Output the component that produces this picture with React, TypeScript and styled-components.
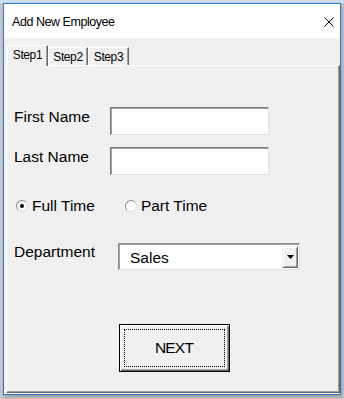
import React, { useState } from "react";
import styled, { createGlobalStyle } from "styled-components";

const GlobalStyle = createGlobalStyle`
  html, body {
    margin: 0;
    padding: 0;
    background: #d4e2f1;
    font-family: "Liberation Sans", Arial, sans-serif;
  }
`;

const Page = styled.div`
  width: 344px;
  height: 399px;
  overflow: hidden;
  background: linear-gradient(#cddff2 0, #cddff2 3px, #c9c9c9 3px);
  padding: 3px 0 0 3px;
  box-sizing: border-box;
`;

const Window = styled.div`
  width: 338px;
  height: 392px;
  box-sizing: border-box;
  border: 1px solid #2b7cc6;
  background: #f0f0f0;
  display: flex;
  flex-direction: column;
  box-shadow: 1px 2px 4px rgba(0, 0, 0, 0.25);
`;

const TitleBar = styled.div`
  height: 33px;
  background: #fff;
  display: flex;
  align-items: center;
  justify-content: space-between;
  padding: 1px 5px 0 8px;
  font-size: 12.5px;
  letter-spacing: -0.45px;
  color: #000;
`;

const Client = styled.div`
  flex: 1;
  display: flex;
  flex-direction: column;
  padding: 7px 0 1px 2px;
`;

const TabStrip = styled.div`
  display: flex;
  align-items: flex-end;
  height: 20px;
  padding-left: 1px;
`;

const Tab = styled.div<{ $active?: boolean; $w: number }>`
  position: relative;
  z-index: ${({ $active }) => ($active ? 1 : 0)};
  width: ${({ $w }) => $w}px;
  height: ${({ $active }) => ($active ? 21 : 18)}px;
  margin-bottom: ${({ $active }) => ($active ? -1 : 0)}px;
  box-sizing: border-box;
  background: #f0f0f0;
  border-top: 1px solid #fff;
  border-left: 1px solid #fff;
  border-right: 1px solid #696969;
  box-shadow: inset -1px 0 0 #a0a0a0;
  display: flex;
  align-items: center;
  justify-content: center;
  padding-bottom: ${({ $active }) => ($active ? 3 : 0)}px;
  font-size: 12px;
  letter-spacing: -0.4px;
  cursor: default;
`;

const Panel = styled.div`
  flex: 1;
  box-sizing: border-box;
  border-top: 1px solid #fff;
  border-left: 1px solid #fff;
  border-right: 1px solid #696969;
  border-bottom: 1px solid #696969;
  box-shadow: inset -1px -1px 0 #a0a0a0;
  display: flex;
  flex-direction: column;
  padding: 41px 7px 0 7px;
`;

const Row = styled.div<{ $gap: number }>`
  display: flex;
  align-items: flex-start;
  margin-top: ${({ $gap }) => $gap}px;
`;

const Label = styled.div<{ $w: number; $offset?: number }>`
  width: ${({ $w }) => $w}px;
  font-size: 15.5px;
  line-height: 18px;
  margin-top: ${({ $offset }) => $offset ?? 1}px;
`;

const TextBox = styled.input`
  width: 159px;
  height: 28px;
  box-sizing: border-box;
  border: 1px solid;
  border-color: #7a7a7a #e3e3e3 #e3e3e3 #7a7a7a;
  box-shadow: inset 1px 1px 0 #a0a0a0;
  background: #fff;
  outline: none;
  padding: 0 4px;
  font: 15px "Liberation Sans", Arial, sans-serif;
`;

const RadioRow = styled.div`
  display: flex;
  align-items: center;
  gap: 30px;
  margin-top: 22px;
  margin-left: 2px;
  height: 18px;
`;

const RadioItem = styled.label`
  display: flex;
  align-items: center;
  gap: 4px;
  font-size: 15.5px;
  line-height: 18px;
  cursor: default;
`;

const Circle = styled.span`
  width: 12px;
  height: 12px;
  box-sizing: border-box;
  border-radius: 50%;
  border: 1px solid;
  border-color: #8c8c8c #dcdcdc #dcdcdc #8c8c8c;
  background: #fff;
  display: flex;
  align-items: center;
  justify-content: center;
`;

const Dot = styled.span`
  width: 4px;
  height: 4px;
  border-radius: 50%;
  background: #000;
`;

const Select = styled.div`
  width: 182px;
  height: 27px;
  box-sizing: border-box;
  border: 1px solid;
  border-color: #8c8c8c #e3e3e3 #e3e3e3 #8c8c8c;
  box-shadow: inset 1px 1px 0 #a0a0a0;
  background: #fff;
  display: flex;
  align-items: stretch;
  padding: 2px 1px 1px 11px;
  font-size: 15.5px;
`;

const SelectText = styled.div`
  flex: 1;
  display: flex;
  align-items: center;
  padding-top: 1px;
`;

const ArrowButton = styled.div`
  width: 16px;
  box-sizing: border-box;
  background: #f0f0f0;
  border-top: 1px solid #f0f0f0;
  border-left: 1px solid #f0f0f0;
  border-right: 1px solid #696969;
  border-bottom: 1px solid #696969;
  box-shadow: inset 1px 1px 0 #fff, inset -1px -1px 0 #a0a0a0;
  display: flex;
  align-items: center;
  justify-content: center;
`;

const NextButton = styled.button`
  position: relative;
  align-self: center;
  margin-top: 54px;
  margin-left: 2px;
  width: 111px;
  height: 48px;
  box-sizing: border-box;
  background: #f0f0f0;
  border: 1px solid #000;
  box-shadow: inset 1px 1px 0 #fff, inset -1px -1px 0 #696969,
    inset -2px -2px 0 #a0a0a0;
  font: 15.5px "Liberation Sans", Arial, sans-serif;
  letter-spacing: -0.8px;
  color: #000;
  padding: 0 0 1px 0;

  &::after {
    content: "";
    position: absolute;
    inset: 4px;
    border: 1px dotted #000;
  }
`;

function App() {
  const [tab, setTab] = useState(1);
  const [fullTime, setFullTime] = useState(true);

  return (
    <Page>
      <GlobalStyle />
      <Window>
        <TitleBar>
          <span>Add New Employee</span>
          <svg width="12" height="12" viewBox="0 0 12 12">
            <path d="M1.5 1.5 L10.5 10.5 M10.5 1.5 L1.5 10.5" stroke="#000" strokeWidth="1" />
          </svg>
        </TitleBar>
        <Client>
          <TabStrip>
            {[1, 2, 3].map((n) => (
              <Tab
                key={n}
                $active={tab === n}
                $w={n === 2 ? 40 : 41}
                onClick={() => setTab(n)}
              >
                Step{n}
              </Tab>
            ))}
          </TabStrip>
          <Panel>
            <Row $gap={0}>
              <Label $w={96}>First Name</Label>
              <TextBox />
            </Row>
            <Row $gap={12}>
              <Label $w={96}>Last Name</Label>
              <TextBox />
            </Row>
            <RadioRow>
              <RadioItem onClick={() => setFullTime(true)}>
                <Circle>{fullTime ? <Dot /> : null}</Circle>
                Full Time
              </RadioItem>
              <RadioItem onClick={() => setFullTime(false)}>
                <Circle>{!fullTime ? <Dot /> : null}</Circle>
                Part Time
              </RadioItem>
            </RadioRow>
            <Row $gap={28}>
              <Label $w={104} $offset={0}>
                Department
              </Label>
              <Select>
                <SelectText>Sales</SelectText>
                <ArrowButton>
                  <svg width="7" height="4" viewBox="0 0 7 4">
                    <path d="M0 0 H7 L3.5 4 Z" fill="#000" />
                  </svg>
                </ArrowButton>
              </Select>
            </Row>
            <NextButton>NEXT</NextButton>
          </Panel>
        </Client>
      </Window>
    </Page>
  );
}

export default App;
